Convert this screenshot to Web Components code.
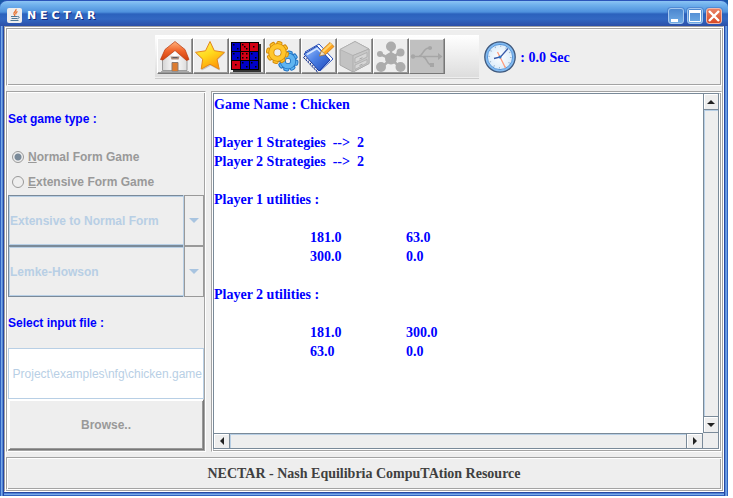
<!DOCTYPE html>
<html lang="en">
<head>
<meta charset="utf-8">
<title>NECTAR</title>
<style>
html, body { height: 100%; margin: 0; background: #fff; }
body { box-sizing: border-box; padding: 0 5px 2px 0; font: bold 12px/16px "Liberation Sans", Arial, sans-serif; color: #333; }
</style>
</head>
<body>
<nectar-window></nectar-window>
<script>
const define = (name, html, setup) => customElements.define(name, class extends HTMLElement {
  constructor() {
    super();
    const t = document.createElement('template');
    t.innerHTML = html;
    this.attachShadow({ mode: 'open' }).append(t.content.cloneNode(true));
  }
  connectedCallback() { if (setup) setup(this, this.shadowRoot); }
});

/* Swing etched border */
define('etched-panel', `
<style>
:host { display: block; box-sizing: border-box; min-width: 0; min-height: 0; padding: 1px;
  border: 1px solid; border-color: #a3a3a3 #fff #fff #a3a3a3;
  box-shadow: inset 1px 1px #fff, inset -1px -1px #a3a3a3; background: #eee; }
</style><slot></slot>`);

const gear = (cx, cy, r, fill, line) => {
  let teeth = '';
  for (let a = 0; a < 360; a += 45)
    teeth += `<rect x="${cx - 2.6}" y="${cy - r}" width="5.2" height="6" rx="1.6" transform="rotate(${a + 12} ${cx} ${cy})"/>`;
  return `<g fill="${fill}" stroke="${line}" stroke-width="1">${teeth}</g>
  <circle cx="${cx}" cy="${cy}" r="${r - 4.8}" fill="none" stroke="${line}" stroke-width="6"/>
  <circle cx="${cx}" cy="${cy}" r="${r - 4.8}" fill="none" stroke="${fill}" stroke-width="4.4"/>`;
};
const dice = () => {
  const red = [1, 2, 4, 6], pips = [2, 3, 1, 2, 4, 2, 1, 2, 2];
  const spots = { 1: [[4, 4]], 2: [[2, 2], [6, 6]], 3: [[2, 2], [4, 4], [6, 6]], 4: [[2, 2], [6, 2], [2, 6], [6, 6]] };
  let s = '<path d="M3 4h28v28H3z" fill="#333"/><path d="M1 2h28v28H1z" fill="#000"/>';
  for (let i = 0; i < 9; i++) {
    const x = 2 + (i % 3) * 9, y = 3 + Math.floor(i / 3) * 9;
    s += `<rect x="${x}" y="${y}" width="8" height="8" fill="${red.includes(i) ? '#d20014' : '#0000c8'}"/>`;
    for (const [a, b] of spots[pips[i]]) s += `<rect x="${x + a - 1}" y="${y + b - 1}" width="1.5" height="1.5" fill="#000"/>`;
  }
  return s;
};
let rings = '';
for (let i = 0; i < 7; i++) rings += `<path d="M${3 + i * 2.1} ${16 + i * 2.2}l-1.5 1.7 1.6 1.2" fill="none" stroke="#16308c" stroke-width="1"/>`;

const icons = {
  Home: `<defs><linearGradient id="r" x2="0" y2="1"><stop stop-color="#ffb27c"/><stop offset=".5" stop-color="#f0642a"/><stop offset="1" stop-color="#cf3c08"/></linearGradient>
    <linearGradient id="w" x2="1" y2="0"><stop stop-color="#d4d4d4"/><stop offset=".5" stop-color="#fff"/><stop offset="1" stop-color="#dcdcdc"/></linearGradient></defs>
    <path d="M4.500 17L17 7l12 10v13.500H4.500z" fill="url(#w)" stroke="#888" stroke-width=".8"/>
    <path d="M17 1.500L7 9.500 2.500 19.500l2.500.5L17 10.500 28.500 20.500l2.500-1L27 9.500z" fill="url(#r)" stroke="#b53a10" stroke-width=".7"/>
    <path d="M12.500 16.500h9l-1 3h-7z" fill="#a98a78"/><path d="M14.500 17.500h5" stroke="#5a5a66"/>
    <path d="M14 22.500h6v9h-6z" fill="#dd7c30" stroke="#8b7a70"/><path d="M3 31.500h28" stroke="#999" stroke-width=".8"/>`,
  Favourite: `<defs><linearGradient id="s" x2=".5" y2="1"><stop stop-color="#fff36a"/><stop offset=".55" stop-color="#ffd91c"/><stop offset="1" stop-color="#ff9d0a"/></linearGradient></defs>
    <path d="M16.500 2.500l4.300 9 10.200 1.500-7.300 7 2 10.500-9-4.800-8.900 4.800 1.700-10.200L2 13.500l10-1.500z" fill="#999" opacity=".5"/>
    <path d="M16 1.500l4.300 9.200 10.200 1.600-7.500 6.900 2.200 10-9.200-5-8.800 4.900 1.500-9.900-7.200-6.900 10-1.500z" fill="url(#s)" stroke="#e5881a" stroke-width="1" stroke-linejoin="round"/>`,
  Game: dice(),
  Solve: gear(22, 21, 10, '#5fb4f0', '#1f72c4') + gear(11.5, 12.5, 11, '#ffc62c', '#d48a08'),
  Edit: `<defs><linearGradient id="n" x2="1" y2="1"><stop stop-color="#a9c9ff"/><stop offset=".45" stop-color="#4f83e6"/><stop offset="1" stop-color="#1c47bb"/></linearGradient></defs>
    <path d="M3 12L17 4l14 15-13 12z" fill="#fff" stroke="#2b52bd"/><path d="M2 14L15 6l13 14-11 11z" fill="url(#n)" stroke="#1f43ab"/>
    <path d="M5 14.500l10-6 4 4" fill="none" stroke="#d8e8ff" stroke-width="1.500"/>${rings}
    <path d="M17.500 16l2-5.500L28 2.500l4 4-8.500 8z" fill="#ffa51e" stroke="#c77b17" stroke-width=".8"/><path d="M20 11l8.500-8 1.500 1.500-8.500 8z" fill="#ffd36b"/><path d="M17.500 16l2-5 4 3.500z" fill="#f5e1bd" stroke="#7a6650" stroke-width=".5"/>`,
  Archive: `<path d="M17 1.500L2 9.500V25l13 7 16-8.500V9z" fill="#c2c2c2" stroke="#a8a8a8"/><path d="M17 1.500L2 9.500l13 6L31 9z" fill="#d0d0d0" stroke="#acacac" stroke-width=".7"/>
    <path d="M15 15.500V32l16-8.500V9z" fill="#c8c8c8" stroke="#a8a8a8" stroke-width=".7"/><path d="M17 18l12-5.500v4.500L17 23zM17 25l12-5.500V23l-12 6.500z" fill="#d6d6d6" stroke="#a6a6a6" stroke-width=".7"/><path d="M21.500 19l3-1.300M21.500 25.500l3-1.300" stroke="#999" stroke-width=".8"/>`,
  Network: `<g stroke="#acacac" stroke-width="2.500"><path d="M17 19V7M17 19l9-7M17 19L6 14M17 19L8 27M17 19l9 8"/></g><g fill="#acacac"><circle cx="17" cy="18.500" r="6"/><circle cx="17" cy="6.500" r="5"/><circle cx="26.500" cy="12.500" r="4"/><circle cx="6" cy="14" r="3"/><circle cx="7" cy="27" r="5"/><circle cx="26.500" cy="27" r="5"/></g>`,
  Connection: `<path d="M0 0h33v33H0z" fill="#c0c0c0"/><g fill="none" stroke="#a6a6a6" stroke-width="1.600"><path d="M2 16.500h27M9 16c4 0 4-8 10-8h3M13 17c4 0 4 8 8 8h3"/></g><path d="M28 13l4.500 3.500L28 20z" fill="#a6a6a6"/><circle cx="3" cy="16.500" r="2.200" fill="#a6a6a6"/><circle cx="20" cy="8" r="2" fill="#a6a6a6"/><path d="M20 23h4v4h-4z" fill="#a6a6a6"/>`
};

define('tool-button', `
<style>
:host { display: block; }
button { display: block; box-sizing: border-box; width: 36px; height: 36px; margin: 0; padding: 0; background: #eee;
  border: 1px solid; border-color: #fff #777 #777 #fff; box-shadow: inset -1px -1px #999; overflow: hidden; }
svg { display: block; width: 33px; height: 33px; }
</style><button type="button"></button>`, (el, root) => {
  const name = el.getAttribute('name'), b = root.querySelector('button');
  b.setAttribute('aria-label', name);
  b.disabled = el.hasAttribute('disabled');
  b.innerHTML = `<svg viewBox="0 0 33 33" aria-hidden="true">${icons[name]}</svg>`;
});

define('tool-strip', `
<style>
:host { display: flex; align-items: flex-start; box-sizing: border-box; width: 324px; height: 44px; padding: 3px 2px;
  background: linear-gradient(#fff, #ddd 42px, #eee 42px, #eee 43px, #ccc 43px); }
</style><slot></slot>`);

define('solve-clock', `
<style>
:host { display: flex; align-items: center; gap: 4px; padding-right: 3px; font: bold 14px/19px "Liberation Serif", "Times New Roman", serif; color: #00f; }
svg { width: 32px; height: 32px; }
</style>
<svg viewBox="0 0 32 32" aria-hidden="true">
<defs><radialGradient id="f"><stop stop-color="#fff"/><stop offset="1" stop-color="#dcecfa"/></radialGradient></defs>
<circle cx="16" cy="16" r="15.200" fill="#82bbf2" stroke="#3f587c" stroke-width="1.300"/><circle cx="16" cy="16" r="12.600" fill="url(#f)" stroke="#4e8fd6" stroke-width=".9"/>
<circle cx="16" cy="16" r="10.800" fill="none" stroke="#9cb4cc" stroke-width="1.600" stroke-dasharray="1 4.650"/>
<path d="M13.500 11l8 16" stroke="#ff9a78" stroke-width="1.200"/><path d="M10 17.500l6.500-1.500L24 7.500" fill="none" stroke="#3858a8" stroke-width="1.300"/><circle cx="16" cy="16" r="1.500" fill="#2f74c8"/>
</svg><span><slot></slot></span>`);

define('radio-option', `
<style>
:host { display: block; min-height: 0; color: #999; }
label { display: flex; align-items: center; gap: 4px; height: 100%; padding-left: 4px; }
input { appearance: none; box-sizing: border-box; width: 12px; height: 12px; margin: 0; border: 1px solid #999; border-radius: 50%; }
input:checked { background: radial-gradient(#7a8a99 3px, transparent 4px); }
</style><label><input type="radio" disabled><span><slot></slot></span></label>`, (el, root) => {
  root.querySelector('input').checked = el.hasAttribute('checked');
});

define('combo-box', `
<style>
:host { display: block; position: relative; min-height: 0; }
select { appearance: none; box-sizing: border-box; display: block; width: 100%; height: 100%; margin: 0; padding: 0 20px 0 1px;
  font: inherit; color: #b8cfe5; opacity: 1; background: #eee; border: 1px solid #7a8a99; border-radius: 0;
  box-shadow: inset 1px 1px #b8cfe5, inset 0 -1px #b8cfe5; }
span { position: absolute; right: 0; top: 0; bottom: 0; width: 20px; box-sizing: border-box; border: 1px solid #999;
  box-shadow: -1px 0 #b8cfe5; background: #eee; display: grid; place-items: center; pointer-events: none; }
</style><select disabled><option></option></select>
<span><svg width="10" height="5" viewBox="0 0 10 5"><path d="M0 0h10L5 5z" fill="#a8c4e0"/></svg></span>`, (el, root) => {
  root.querySelector('option').textContent = el.getAttribute('value');
  root.querySelector('select').setAttribute('aria-label', el.getAttribute('label'));
});

define('file-field', `
<style>
:host { display: block; min-height: 0; }
input { display: block; box-sizing: border-box; width: 100%; height: 100%; margin: 0; padding: 0 1px; border: 1px solid #b8cfe5; background: #fff;
  font: 12px/16px "Liberation Sans", Arial, sans-serif; color: #b8cfe5; direction: rtl; }
</style><input type="text" aria-label="Select input file" disabled value="Project\\examples\\nfg\\chicken.game">`);

define('push-button', `
<style>
:host { display: block; min-height: 0; }
button { display: block; box-sizing: border-box; width: 100%; height: 100%; margin: 0; font: inherit; color: #999; background: #eee;
  border: 1px solid; border-color: #fff #777 #777 #fff; box-shadow: inset 1px 1px #fff, inset -1px -1px #999; }
</style><button type="button" disabled><slot></slot></button>`);

define('scroll-bar', `
<style>
:host { display: flex; min-width: 0; min-height: 0; box-sizing: border-box; background: #eee; border: 0 solid #7a8a99; }
:host([axis="y"]) { flex-direction: column; border-left-width: 1px; border-bottom-width: 1px; }
:host([axis="x"]) { border-top-width: 1px; border-right-width: 1px; }
button { flex: none; box-sizing: border-box; margin: 0; padding: 0; border: 1px solid; border-color: #fff #eee #eee #fff; background: #eee; display: grid; place-items: center; }
.track { flex: 1; }
:host([axis="y"]) button { height: 15px; }
:host([axis="x"]) button { width: 15px; }
:host([axis="y"]) .track { border: solid #7a8a99; border-width: 1px 0; box-shadow: inset 1px 1px #b8cfe5; }
:host([axis="x"]) .track { border: solid #7a8a99; border-width: 0 1px; box-shadow: inset 1px 1px #b8cfe5; }
:host([axis="x"]) svg { transform: rotate(-90deg); }
</style>
<button type="button" aria-label="Scroll back"><svg width="8" height="4" viewBox="0 0 8 4"><path d="M0 4L4 0l4 4z" fill="#222"/></svg></button>
<div class="track"></div>
<button type="button" aria-label="Scroll forward"><svg width="8" height="4" viewBox="0 0 8 4"><path d="M0 0l4 4 4-4z" fill="#222"/></svg></button>`);

define('output-area', `
<style>
:host { display: grid; grid-template: minmax(0, 1fr) 15px / minmax(0, 1fr) 15px; box-sizing: border-box; height: 100%;
  border: 1px solid; border-color: #7a8a99 #fff #fff #7a8a99; box-shadow: inset -1px -1px #7a8a99; padding: 0 1px 1px 0; background: #eee; }
textarea { display: block; box-sizing: border-box; width: 100%; height: 100%; margin: 0; padding: 1px 0; border: 0; outline: 0; resize: none; overflow: hidden;
  white-space: pre; tab-size: 96px; font: bold 14px/19px "Liberation Serif", "Times New Roman", serif; color: #00f; background: #fff; }
</style>
<textarea readonly aria-label="Game output">Game Name : Chicken

Player 1 Strategies  --&gt;  2
Player 2 Strategies  --&gt;  2

Player 1 utilities :

	181.0	63.0
	300.0	0.0

Player 2 utilities :

	181.0	300.0
	63.0	0.0</textarea>
<scroll-bar axis="y"></scroll-bar><scroll-bar axis="x"></scroll-bar>`);

define('title-bar', `
<style>
:host { display: flex; align-items: center; box-sizing: border-box; height: 26px; padding: 4px 6px 0 7px; border-top: 1px solid #2b55ba; border-radius: 7px 7px 0 0;
  background: linear-gradient(#8bc4f4, #6fb0ec 4px, #4f92dd 11px, #2b62bd 13px, #3268c2 18px, #2c4fa8); }
.app { width: 15px; height: 15px; background: #eee; border-radius: 2px; }
h1 { flex: 1; margin: 0 0 0 5px; font: bold 11px/16px "DejaVu Sans", sans-serif; color: #fff; text-shadow: 1px 1px #12277c; }
nav { display: flex; gap: 3px; }
button { width: 16px; height: 16px; box-sizing: border-box; padding: 0; border: 1px solid #a6c8ee; border-radius: 3px; background: linear-gradient(#4b86cf, #6fabe4); box-shadow: 0 0 0 1px #2c58ad55; }
.close { background: linear-gradient(#e98266, #d84a25); border-color: #f3b7a8; }
button svg { display: block; width: 14px; height: 14px; }
</style>
<svg class="app" viewBox="0 0 14 15" aria-hidden="true"><g fill="none"><path d="M8.500 1c1 2-3 3-2 5 .3.800.8 1 .8 2M10 3.500C8 4.500 8 5.500 8.500 6.500" stroke="#e8702a" stroke-width="1.200"/><path d="M3.500 8.500h6.500M4 10.500h5.500M3 12.500h8M10 8.500c2.500-.5 2 2-.3 2.300" stroke="#4f7896"/></g></svg>
<h1>N E C T A R</h1>
<nav aria-label="Window">
<button type="button" aria-label="Minimize"><svg viewBox="0 0 14 14"><path d="M2 10h7v3H2z" fill="#fff"/></svg></button>
<button type="button" aria-label="Maximize"><svg viewBox="0 0 14 14"><path d="M1.500 1.500h11v11h-11z" fill="none" stroke="#fff"/><path d="M1 1h12v3H1z" fill="#fff"/></svg></button>
<button type="button" class="close" aria-label="Close"><svg viewBox="0 0 14 14"><path d="M2 2l10 10M12 2L2 12" stroke="#fff" stroke-width="2.400"/></svg></button>
</nav>`);

define('nectar-window', `
<style>
:host { display: flex; flex-direction: column; height: 100%; box-sizing: border-box; background: linear-gradient(#1859a8, #1859a8) top / 100% 8px no-repeat; }
.frame { flex: 1; min-height: 0; box-sizing: border-box; padding: 0 4px 4px; display: flex;
  background: linear-gradient(90deg, #2f62c0 1px, #79a9e8 1px, #79a9e8 2px, #5285d4 2px, #5285d4 3px, #2648a4 3px, #2648a4 4px, transparent 4px, transparent calc(100% - 4px), #2648a4 calc(100% - 4px), #2648a4 calc(100% - 3px), #5285d4 calc(100% - 3px), #79a9e8 calc(100% - 1px), #2f62c0 calc(100% - 1px)),
    linear-gradient(0deg, #2f62c0 1px, #79a9e8 1px, #79a9e8 2px, #5285d4 2px, #5285d4 3px, #2648a4 3px); }
.root { flex: 1; }
.layout { display: flex; flex-direction: column; gap: 5px; height: 100%; }
.top { height: 58px; flex: none; }
.tools { display: flex; height: 100%; align-items: center; justify-content: center; gap: 5px; }
.middle { flex: 1; min-height: 0; display: flex; gap: 5px; }
.side { width: 200px; flex: none; }
.output { flex: 1; }
.form { display: grid; height: 100%; grid-template-rows: repeat(7, minmax(0, 1fr)); }
h2 { margin: 0; align-self: center; font: inherit; color: #00f; }
.radios { display: grid; grid-template-rows: 1fr 1fr; }
footer { display: flex; align-items: center; justify-content: center; height: 100%; font: bold 14px/19px "Liberation Serif", "Times New Roman", serif; color: #404040; }
.bottom { height: 33px; flex: none; }
</style>
<title-bar></title-bar>
<div class="frame">
<etched-panel class="root"><div class="layout">
  <etched-panel class="top"><div class="tools">
    <tool-strip>
      <tool-button name="Home"></tool-button><tool-button name="Favourite"></tool-button><tool-button name="Game"></tool-button><tool-button name="Solve"></tool-button><tool-button name="Edit"></tool-button><tool-button name="Archive" disabled></tool-button><tool-button name="Network" disabled></tool-button><tool-button name="Connection" disabled></tool-button>
    </tool-strip>
    <solve-clock>: 0.0 Sec</solve-clock>
  </div></etched-panel>
  <div class="middle">
    <etched-panel class="side"><div class="form">
      <h2>Set game type :</h2>
      <div class="radios" role="radiogroup" aria-label="Set game type">
        <radio-option checked><u>N</u>ormal Form Game</radio-option>
        <radio-option><u>E</u>xtensive Form Game</radio-option>
      </div>
      <combo-box label="Conversion" value="Extensive to Normal Form"></combo-box>
      <combo-box label="Algorithm" value="Lemke-Howson"></combo-box>
      <h2>Select input file :</h2>
      <file-field></file-field>
      <push-button>Browse..</push-button>
    </div></etched-panel>
    <etched-panel class="output"><output-area></output-area></etched-panel>
  </div>
  <etched-panel class="bottom"><footer>NECTAR - Nash Equilibria CompuTAtion Resource</footer></etched-panel>
</div></etched-panel>
</div>`);
</script>
</body>
</html>
